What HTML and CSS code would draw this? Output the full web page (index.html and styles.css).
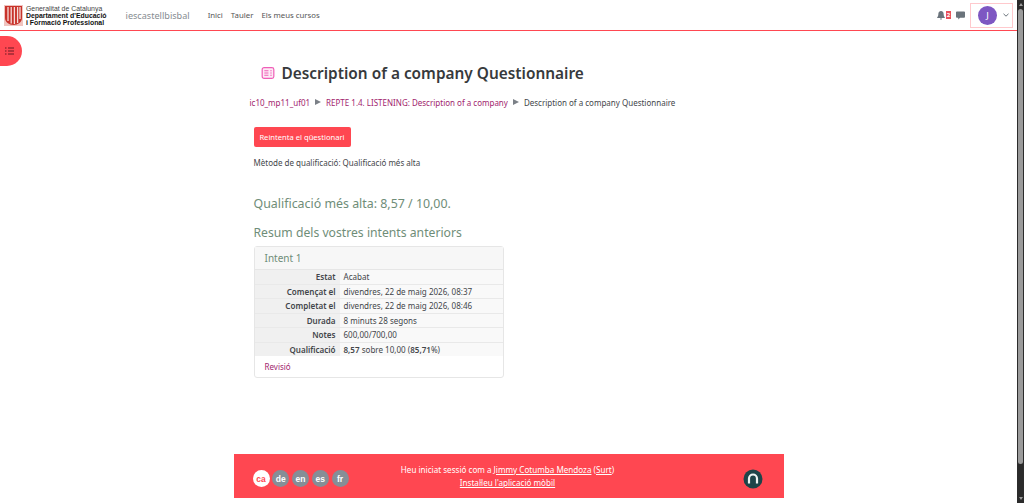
FILE: index.html
```html
<!DOCTYPE html>
<html lang="ca">
<head>
  <title>Description of a company Questionnaire</title>
  <link rel="stylesheet" href="styles.css">
</head>
<body>
  <div class="window">
    <div class="page">
      <header class="navbar">
        <div class="logo">
          <svg class="logo-mark" width="19" height="21" viewBox="0 0 19 21">
            <rect x="0" y="0" width="19" height="21" fill="#f0c4bf"/>
            <path d="M1 1h17v12c0 4-4 7-8.500 7S1 17 1 13z" fill="#c8332b"/>
            <path d="M4 2v14M7.200 2v16.500M10.400 2v17M13.600 2v16M16 2v12" stroke="#f6dcd8" stroke-width="1.300" fill="none"/>
          </svg>
          <div class="logo-text">
            <span>Generalitat de Catalunya</span>
            <strong>Departament d'Educació</strong>
            <strong>i Formació Professional</strong>
          </div>
        </div>
        <a class="site-name">iescastellbisbal</a>
        <nav class="nav-links">
          <a>Inici</a>
          <a>Tauler</a>
          <a>Els meus cursos</a>
        </nav>
        <div class="nav-right">
          <div class="bell">
            <svg width="8" height="9" viewBox="0 0 9 10"><path d="M4.500 0C2.600 0 1.500 1.500 1.500 3.500c0 2.500-1.500 3.500-1.500 4.300h9c0-.8-1.500-1.800-1.500-4.300C7.500 1.500 6.400 0 4.500 0zM3.300 8.500a1.200 1.200 0 0 0 2.400 0z" fill="#6a737b"/></svg>
            <span class="bell-count">2</span>
          </div>
          <svg class="chat" width="9" height="9" viewBox="0 0 10 10"><path d="M1 .5h8a1 1 0 0 1 1 1v5a1 1 0 0 1-1 1H4.500L2.500 9.500V7.500H1a1 1 0 0 1-1-1v-5a1 1 0 0 1 1-1z" fill="#6a737b"/></svg>
          <div class="user-menu">
            <span class="avatar">J</span>
            <svg width="6" height="4" viewBox="0 0 6 4"><path d="M.5 .8L3 3.200 5.500 .8" stroke="#6a737b" stroke-width="1" fill="none"/></svg>
          </div>
        </div>
      </header>

      <div class="drawer-toggle">
        <svg width="9" height="8" viewBox="0 0 9 8"><path d="M0 1h1.500M3 1h6M0 4h1.500M3 4h6M0 7h1.500M3 7h6" stroke="#9c2a33" stroke-width="1.400" fill="none"/></svg>
      </div>

      <main class="content">
        <div class="page-title">
          <svg width="14" height="12" viewBox="0 0 14 13"><rect x=".7" y=".7" width="12.600" height="11.600" rx="2" fill="#fdeaf5" stroke="#ef5fb8" stroke-width="1.300"/><path d="M3 4h4.500M3 6.500h4.500M3 9h4.500M9.500 4h1.500M9.500 6.500h1.500M9.500 9h1.500" stroke="#ef5fb8" stroke-width="1.100"/></svg>
          <h1>Description of a company Questionnaire</h1>
        </div>
        <ol class="breadcrumb">
          <li><a>ic10_mp11_uf01</a></li>
          <li class="sep"></li>
          <li><a>REPTE 1.4. LISTENING: Description of a company</a></li>
          <li class="sep"></li>
          <li>Description of a company Questionnaire</li>
        </ol>
        <button class="btn-retry">Reintenta el qüestionari</button>
        <p class="method">Mètode de qualificació: Qualificació més alta</p>
        <h3 class="best-grade">Qualificació més alta: 8,57 / 10,00.</h3>
        <h3 class="summary-title">Resum dels vostres intents anteriors</h3>
        <section class="attempt-card">
          <h4>Intent 1</h4>
          <table class="attempt-table">
            <tr><th>Estat</th><td>Acabat</td></tr>
            <tr><th>Començat el</th><td>divendres, 22 de maig 2026, 08:37</td></tr>
            <tr><th>Completat el</th><td>divendres, 22 de maig 2026, 08:46</td></tr>
            <tr><th>Durada</th><td>8 minuts 28 segons</td></tr>
            <tr><th>Notes</th><td>600,00/700,00</td></tr>
            <tr><th>Qualificació</th><td><b>8,57</b> sobre 10,00 (<b>85,71</b>%)</td></tr>
          </table>
          <a class="review-link">Revisió</a>
        </section>
      </main>

      <footer class="footer">
        <div class="langs">
          <span class="lang active">ca</span>
          <span class="lang">de</span>
          <span class="lang">en</span>
          <span class="lang">es</span>
          <span class="lang">fr</span>
        </div>
        <div class="login-info">
          <div>Heu iniciat sessió com a <a>Jimmy Cotumba Mendoza</a> (<a>Surt</a>)</div>
          <div><a>Instal·leu l'aplicació mòbil</a></div>
        </div>
        <div class="footer-logo">
          <svg width="20" height="20" viewBox="0 0 20 20"><circle cx="10" cy="10" r="9.500" fill="#1d4449"/><path d="M6 14.500V9.500a4 4 0 0 1 8 0v5" stroke="#eef3f3" stroke-width="2.200" fill="none"/></svg>
        </div>
      </footer>
    </div>

    <div class="scrollbar">
      <div class="arrow-up"></div>
      <div class="thumb"></div>
      <div class="arrow-down"></div>
    </div>
  </div>
</body>
</html>
```

FILE: styles.css
```css
html, body {
  margin: 0;
  height: 503px;
  overflow: hidden;
}
body {
  font-family: "Noto Sans", "Open Sans", sans-serif;
  font-size: 8px;
  color: #43464a;
  background: white;
}
.window {
  display: flex;
  height: 503px;
}
.page {
  flex: 1;
  min-width: 0;
  display: flex;
  flex-direction: column;
  position: relative;
}

/* top bar */
.navbar {
  height: 30px;
  flex: none;
  display: flex;
  align-items: center;
  border-bottom: 1px solid #ff4751;
  padding: 0 4px;
}
.logo {
  display: flex;
  align-items: center;
  gap: 3px;
}
.logo-text {
  display: flex;
  flex-direction: column;
  font-family: "Liberation Sans", sans-serif;
  font-size: 6.900px;
  line-height: 7px;
  color: #444;
}
.logo-text strong {
  color: #111;
}
.site-name {
  margin-left: 19px;
  font-size: 9.100px;
  color: #868c91;
}
.nav-links {
  display: flex;
  gap: 8px;
  margin-left: 18px;
  font-size: 7.800px;
  color: #555;
}
.nav-right {
  margin-left: auto;
  display: flex;
  align-items: center;
}
.bell {
  display: flex;
  align-items: center;
  gap: 1px;
}
.bell-count {
  background: #e9505a;
  color: white;
  font-size: 6px;
  line-height: 8px;
  width: 5px;
  text-align: center;
  font-weight: 700;
  overflow: hidden;
}
.chat {
  margin-left: 5px;
}
.user-menu {
  margin-left: 5px;
  width: 43px;
  height: 25px;
  box-sizing: border-box;
  border: 1px solid #ffc9cd;
  display: flex;
  align-items: center;
  gap: 6px;
  padding-left: 7px;
}
.avatar {
  width: 19px;
  height: 19px;
  border-radius: 50%;
  background: #7e57c2;
  color: white;
  font-size: 9.500px;
  display: flex;
  align-items: center;
  justify-content: center;
}
.drawer-toggle {
  position: absolute;
  left: 0;
  top: 36px;
  width: 22px;
  height: 30px;
  border-radius: 0 15px 15px 0;
  background: #ff4751;
  display: flex;
  align-items: center;
  justify-content: center;
  padding-right: 3px;
  box-sizing: border-box;
}

/* main column */
.content {
  flex: 1;
  width: 550px;
  margin: 0 auto;
  padding: 0 20px;
  box-sizing: border-box;
}
.page-title {
  display: flex;
  align-items: center;
  gap: 7px;
  margin: 32px 0 0 7px;
  height: 20px;
}
.page-title h1 {
  margin: 0;
  font-size: 15.400px;
  font-weight: 600;
  color: #373a3c;
}
.breadcrumb {
  list-style: none;
  display: flex;
  align-items: center;
  margin: 13px 0 0 -4px;
  padding: 0;
  height: 12px;
  white-space: nowrap;
}
.breadcrumb a {
  color: #a11d6d;
}
.sep {
  width: 0;
  height: 0;
  margin: 0 5px;
  border-left: 6px solid #7b8087;
  border-top: 3.500px solid transparent;
  border-bottom: 3.500px solid transparent;
}
.btn-retry {
  display: block;
  margin-top: 19px;
  width: 97px;
  height: 20px;
  padding: 0;
  border: none;
  border-radius: 2px;
  background: #ff4751;
  color: white;
  font-family: inherit;
  font-size: 7.600px;
}
.method {
  margin: 10px 0 0;
  line-height: 12px;
}
.best-grade, .summary-title {
  margin: 0;
  font-weight: 400;
  color: #6f8d78;
}
.best-grade {
  margin-top: 26px;
  font-size: 12.400px;
  line-height: 18px;
}
.summary-title {
  margin-top: 11px;
  font-size: 12.200px;
  line-height: 18px;
}
.attempt-card {
  width: 250px;
  margin-top: 4px;
  box-sizing: border-box;
  border: 1px solid #e6e6e6;
  border-radius: 3px;
  background: white;
}
.attempt-card h4 {
  margin: 0;
  height: 22px;
  padding-left: 10px;
  font-size: 10px;
  font-weight: 400;
  line-height: 23px;
  color: #6f8d78;
  background: #f7f7f7;
  border-bottom: 1px solid #e6e6e6;
}
.attempt-table {
  width: 100%;
  border-collapse: collapse;
}
.attempt-table th, .attempt-table td {
  height: 13.500px;
  padding: 0;
  font-size: 8.050px;
  border-bottom: 1px solid #e9e9e9;
  white-space: nowrap;
}
.attempt-table tr:last-child th, .attempt-table tr:last-child td {
  border-bottom: none;
}
.attempt-table th {
  width: 81px;
  padding-right: 4px;
  text-align: right;
  background: #f0f0f0;
  font-weight: 600;
}
.attempt-table td {
  padding-left: 4px;
  background: #f9f9f9;
}
.attempt-table b {
  font-weight: 600;
}
.review-link {
  display: block;
  height: 21px;
  line-height: 21px;
  padding-left: 10px;
  color: #a11d6d;
}

/* footer */
.footer {
  flex: none;
  width: 550px;
  height: 44px;
  margin: 0 auto 5px;
  background: #ff4751;
  color: white;
  display: flex;
  align-items: center;
  padding: 0 21px 0 19px;
  box-sizing: border-box;
}
.langs {
  display: flex;
  gap: 2.750px;
  width: 96px;
  margin-top: 5px;
}
.lang {
  flex: none;
  width: 17px;
  height: 17px;
  border-radius: 50%;
  background: #868e96;
  color: white;
  font-family: "Liberation Sans", sans-serif;
  font-size: 8.500px;
  font-weight: 700;
  display: flex;
  align-items: center;
  justify-content: center;
}
.lang.active {
  background: white;
  color: #ff4751;
}
.login-info {
  flex: 1;
  text-align: center;
  font-size: 8.100px;
  line-height: 13px;
  margin-top: -1px;
}
.login-info a {
  text-decoration: underline;
}
.footer-logo {
  width: 96px;
  display: flex;
  justify-content: flex-end;
  margin-top: 5px;
}

/* browser scrollbar */
.scrollbar {
  flex: none;
  width: 7px;
  background: #2b2b2b;
  display: flex;
  flex-direction: column;
  align-items: center;
}
.thumb {
  width: 5px;
  height: 455px;
  margin-top: 3px;
  border-radius: 3px;
  background: #9b9b9b;
}
.arrow-up, .arrow-down {
  width: 0;
  height: 0;
  border-left: 2.500px solid transparent;
  border-right: 2.500px solid transparent;
}
.arrow-up {
  margin-top: 3px;
  border-bottom: 3px solid #9b9b9b;
}
.arrow-down {
  margin-top: auto;
  margin-bottom: 3px;
  border-top: 3px solid #9b9b9b;
}
```
